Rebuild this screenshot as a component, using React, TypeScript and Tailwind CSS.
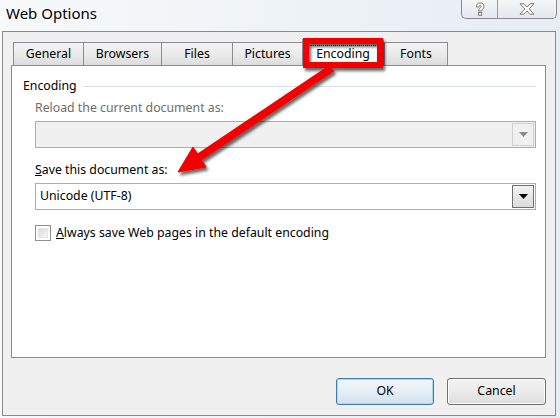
import React from "react";

const tabs = [
  { label: "General", w: 70 },
  { label: "Browsers", w: 78 },
  { label: "Files", w: 71 },
  { label: "Pictures", w: 70 },
  { label: "Encoding", w: 82, sel: true },
  { label: "Fonts", w: 64 },
];

function ComboArrow({ disabled }: { disabled?: boolean }) {
  return (
    <svg width="9" height="5" viewBox="0 0 9 5">
      <path d="M0 0 H9 L4.5 5 Z" fill={disabled ? "#8a8a8a" : "#000"} />
    </svg>
  );
}

export default function App() {
  return (
    <div className="relative w-[560px] h-[418px] overflow-hidden bg-gradient-to-r from-[#f7f9fb] via-[#eef3f7] to-[#e6edf3] font-['Noto_Sans',sans-serif] text-[12.3px] text-black">
      {/* Title bar */}
      <div className="h-[31px] flex items-start justify-between">
        <div className="pl-[6px] pt-[2px] text-[15px] leading-[22px]">Web Options</div>
        <div className="flex mr-[3px] h-[19px] border border-t-0 border-[#8b8b8b] rounded-b-[5px] bg-gradient-to-b from-[#f4f6f8] to-[#e3e8ee] overflow-hidden">
          <div className="w-[36px] flex items-center justify-center border-r border-[#9a9a9a]">
            <svg width="12" height="15" viewBox="0 0 12 15">
              <path
                d="M2.5 5 C2.5 2 4 1 6 1 C8.8 1 10 2.5 10 4.5 C10 6.6 7.8 7.2 7.6 9 L4.6 9 C4.6 6.5 7 6 7 4.6 C7 3.9 6.6 3.5 6.1 3.5 C5.4 3.5 5.2 4 5.2 5 Z"
                fill="#fff"
                stroke="#7a7a7a"
                strokeWidth="1"
              />
              <rect x="4.6" y="10.3" width="3" height="3" fill="#fff" stroke="#7a7a7a" strokeWidth="1" />
            </svg>
          </div>
          <div className="w-[58px] flex items-center justify-center">
            <svg width="16" height="12" viewBox="0 0 16 12">
              <path
                d="M1 0.8 H5 L8 4 L11 0.8 H15 L10.2 6 L15 11.2 H11 L8 8 L5 11.2 H1 L5.8 6 Z"
                fill="#fff"
                stroke="#7a7a7a"
                strokeWidth="1"
              />
            </svg>
          </div>
        </div>
      </div>

      {/* Dialog frame */}
      <div className="mx-[2px] w-[554px] h-[385px] border border-[#8a8a8a] bg-[#f0f0f0] flex flex-col">
        {/* Tabs */}
        <div className="pt-[7px] pl-[10px]">
          <div className="flex items-end h-[26px]">
            {tabs.map((t) =>
              t.sel ? (
                <div
                  key={t.label}
                  style={{ width: t.w }}
                  className="relative z-10 h-[27px] mb-[-1px] bg-white border border-b-0 border-[#898c95] flex items-start justify-center pt-[5px]"
                >
                  <span className="border border-dotted border-black px-[7px] leading-[16px]">{t.label}</span>
                </div>
              ) : (
                <div
                  key={t.label}
                  style={{ width: t.w }}
                  className="h-[23px] border border-b-0 border-r-0 last:border-r border-[#898c95] bg-gradient-to-b from-[#f3f3f3] via-[#ebebeb] to-[#dcdcdc] flex items-center justify-center"
                >
                  {t.label}
                </div>
              )
            )}
          </div>
        </div>

        {/* Panel */}
        <div className="ml-[8px] w-[535px] h-[293px] bg-white border border-[#898c95] pl-[11px] pr-[9px] pt-[10px]">
          <div className="flex items-center gap-[6px] h-[20px]">
            <span>Encoding</span>
            <div className="flex-1 h-px bg-[#d5dfe5]" />
          </div>
          <div className="pl-[12px]">
            <div className="mt-[3px] h-[18px] leading-[18px] text-[#6d6d6d]">Reload the current document as:</div>
            <div className="mt-[4px] h-[27px] border border-[#adadad] bg-[#f0f0f0] flex justify-end p-px">
              <div className="w-[22px] h-full border border-[#d0d0d0] bg-[#f0f0f0] flex items-center justify-center">
                <ComboArrow disabled />
              </div>
            </div>
            <div className="mt-[13px] h-[18px] leading-[18px]">
              <span className="underline">S</span>ave this document as:
            </div>
            <div className="mt-[4px] h-[27px] border border-[#abadb3] bg-white flex items-center justify-between p-px">
              <span className="pl-[3px]">Unicode (UTF-8)</span>
              <div className="w-[22px] h-full border border-[#707070] bg-gradient-to-b from-[#f2f2f2] to-[#dcdcdc] flex items-center justify-center">
                <ComboArrow />
              </div>
            </div>
            <div className="mt-[14px] flex items-center gap-[5px]">
              <div className="w-[16px] h-[16px] border border-[#8f8f8f] bg-white p-[2px]">
                <div className="w-full h-full bg-gradient-to-br from-[#dcdcdc] to-[#f6f6f6] border border-[#e4e4e4]" />
              </div>
              <span>
                <span className="underline">A</span>lways save Web pages in the default encoding
              </span>
            </div>
          </div>
        </div>

        {/* Footer */}
        <div className="flex-1 flex items-start justify-end gap-[13px] pt-[20px] pr-[9px]">
          <button className="w-[98px] h-[27px] rounded-[3px] border border-[#3c7fb1] bg-gradient-to-b from-[#f2f6fa] via-[#e6eef5] to-[#d3e2ee] shadow-[inset_0_0_0_1px_#a8d8f0] text-[12.3px]">
            OK
          </button>
          <button className="w-[99px] h-[27px] rounded-[3px] border border-[#707070] bg-gradient-to-b from-[#f2f2f2] via-[#ebebeb] to-[#dddddd] shadow-[inset_0_0_0_1px_#fcfcfc] text-[12.3px]">
            Cancel
          </button>
        </div>
      </div>

      {/* Red annotation overlay */}
      <svg className="absolute left-0 top-0 z-20 pointer-events-none" width="560" height="418" viewBox="0 0 560 418">
        <defs>
          <filter id="sh" x="-20%" y="-20%" width="140%" height="140%">
            <feDropShadow dx="2" dy="3" stdDeviation="1.5" floodColor="#000" floodOpacity="0.6" />
          </filter>
        </defs>
        <g filter="url(#sh)">
          <line x1="332" y1="68" x2="198" y2="158" stroke="#f20000" strokeWidth="8" />
          <path d="M178 172 L193 147 L206 167 Z" fill="#f20000" stroke="#f20000" strokeWidth="1" strokeLinejoin="round" />
          <rect x="306" y="41" width="74" height="24" fill="none" stroke="#f20000" strokeWidth="6" />
        </g>
      </svg>
    </div>
  );
}
